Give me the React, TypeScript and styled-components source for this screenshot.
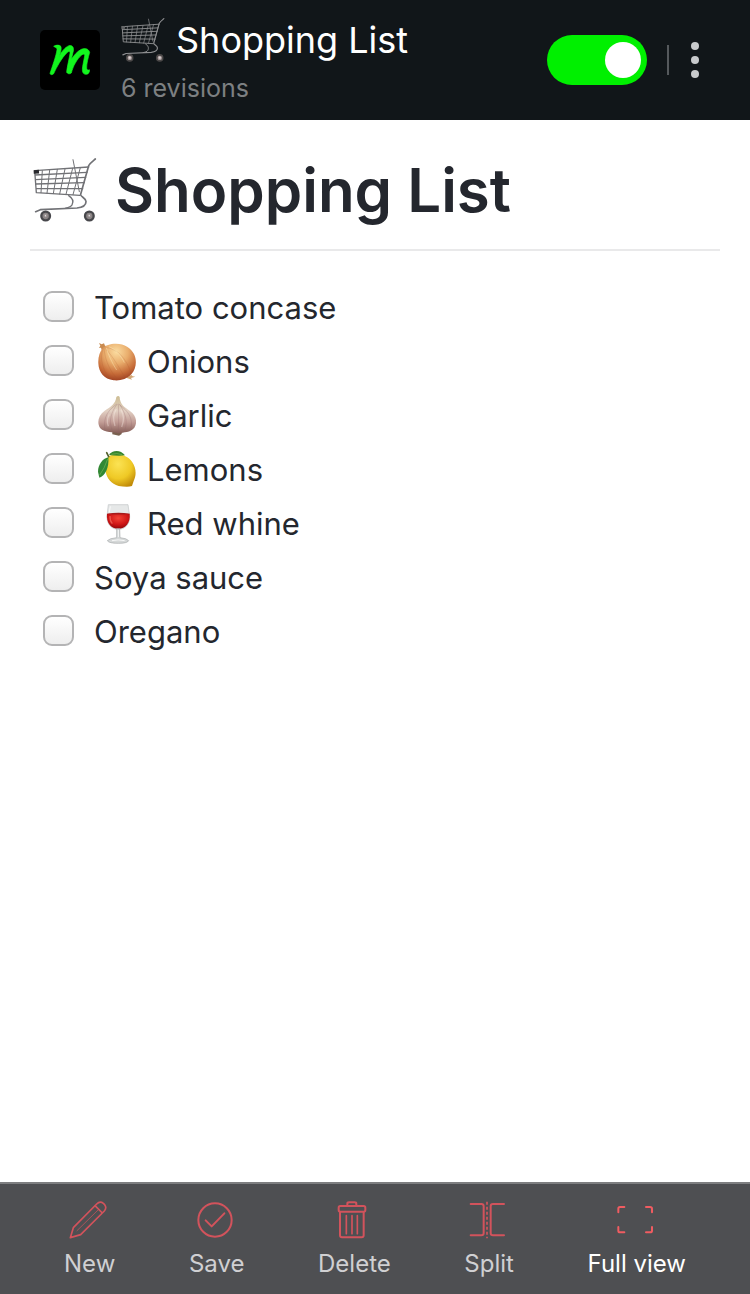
import React from "react";
import styled, { createGlobalStyle } from "styled-components";

const GlobalStyle = createGlobalStyle`
  * { box-sizing: border-box; }
  body {
    margin: 0;
    background: #ffffff;
    color: #24272e;
    font-family: Inter, "Liberation Sans", sans-serif;
  }
`;

const Page = styled.div`
  display: flex;
  flex-direction: column;
  min-height: 100vh;
`;

const Header = styled.header`
  display: flex;
  align-items: center;
  gap: 20px;
  height: 120px;
  padding: 0 40px;
  background: #111619;
`;

const Logo = styled.a`
  display: block;
  width: 60px;
  height: 60px;
  border-radius: 5px;
  background: #000000;
`;

const Heading = styled.div`
  flex: 1;
  min-width: 0;
  padding: 8px 0 0 1px;
`;

const DocumentName = styled.div`
  display: flex;
  align-items: center;
  gap: 11px;
  height: 48px;
  color: #ffffff;
  font-size: 36px;
  line-height: 48px;
  white-space: nowrap;
`;

const Revisions = styled.div`
  height: 48px;
  color: #7d8082;
  font-size: 25px;
  line-height: 48px;
`;

const Switch = styled.input`
  appearance: none;
  display: flex;
  align-items: center;
  justify-content: flex-start;
  width: 100px;
  height: 50px;
  margin: 0;
  padding: 0 6px;
  border-radius: 25px;
  background: #5a5d60;
  cursor: pointer;

  &::before {
    content: "";
    width: 36px;
    height: 36px;
    border-radius: 50%;
    background: #ffffff;
  }

  &:checked {
    justify-content: flex-end;
    background: #00f000;
  }
`;

const Divider = styled.span`
  width: 2px;
  height: 30px;
  background: #55595c;
`;

const MenuButton = styled.button`
  display: flex;
  flex-direction: column;
  align-items: center;
  justify-content: center;
  gap: 6px;
  width: 12px;
  height: 50px;
  margin-right: 9px;
  padding: 0;
  border: 0;
  background: none;
  cursor: pointer;
`;

const Dot = styled.span`
  width: 8px;
  height: 8px;
  border-radius: 50%;
  background: #c8cacc;
`;

const Main = styled.main`
  flex: 1;
  padding: 30px;
`;

const Title = styled.h1`
  display: flex;
  align-items: center;
  gap: 18px;
  margin: 0;
  padding: 0 3px 19px;
  border-bottom: 2px solid #e9e9ea;
  font-size: 60px;
  font-weight: 600;
  line-height: 80px;
`;

const List = styled.ul`
  margin: 30px 0 0;
  padding: 0 13px;
  list-style: none;
`;

const Item = styled.li`
  display: flex;
  align-items: center;
  gap: 20px;
  height: 54px;
`;

const Checkbox = styled.input`
  appearance: none;
  flex: none;
  width: 31px;
  height: 31px;
  margin: 0 0 3px;
  border: 2px solid #b4b4b5;
  border-radius: 9px;
  background: linear-gradient(#ffffff, #eeeeee);

  &:checked {
    background: #00f000;
  }
`;

const ItemLabel = styled.label`
  display: flex;
  align-items: center;
  font-size: 31px;
  line-height: 54px;
`;

const Toolbar = styled.nav`
  display: flex;
  justify-content: space-between;
  height: 112px;
  padding: 17px 64px 0;
  border-top: 2px solid #7d7e80;
  background: #4e4f52;
`;

const Tool = styled.button<{ $active?: boolean }>`
  display: flex;
  flex-direction: column;
  align-items: center;
  gap: 9px;
  padding: 0;
  border: 0;
  background: none;
  color: ${(p) => (p.$active ? "#ffffff" : "#d0d0d2")};
  font-family: inherit;
  font-size: 24px;
  line-height: 32px;
  cursor: pointer;
`;

const Icon = styled.svg`
  display: block;
  flex: none;
`;

const FoodIcon = styled(Icon)`
  margin: 0 11px 0 2px;
`;

const ToolIcon = styled(Icon)`
  margin-right: 4px;
`;

const Cart = ({ size, dark }: { size: number; dark?: boolean }) => {
  const wire = dark ? "#8e8f91" : "#717276";
  return (
    <Icon width={size} height={size} viewBox="40 54 192 192" fill="none" stroke={wire} strokeLinecap="round" strokeLinejoin="round" aria-hidden="true">
      <path strokeWidth="5" d="M227 57C220 63 213 67 207 77L183 163C181 170 200 174 199 185C199 198 188 202 172 204L62 209L48 215" />
      <path strokeWidth="4" d="M147 167C158 174 163 184 157 195C154 201 145 203 137 205" />
      <path strokeWidth="3" d="M160 59L179 155" />
      <path strokeWidth="4" d="M45 92L207 81M45 92L50 158L181 166M46 105L202 97M47 119L198 112M48 132L194 128M49 145L189 146" />
      <path strokeWidth="3" d="M68 92L64 158M90 90L82 160M113 88L101 161M136 87L120 162M159 85L139 163M182 83L160 164" />
      <path stroke={dark ? "#626365" : "#292a2e"} strokeWidth="11" strokeLinecap="butt" d="M42 96L58 95" />
      {[78, 209].map((x) => (
        <g key={x}>
          <circle cx={x} cy="228" r="13" strokeWidth="7" stroke={dark ? "#4b4848" : "#47474b"} fill={dark ? "#a99c9c" : "#8a8485"} />
          <circle cx={x} cy="227" r="4" strokeWidth="3" stroke={dark ? "#cfc4c4" : "#958b8c"} fill="#dddddd" />
        </g>
      ))}
    </Icon>
  );
};

const Onion = () => (
  <FoodIcon width="40" height="40" viewBox="198 186 120 120" aria-hidden="true">
    <defs>
      <radialGradient id="onion" cx=".48" cy=".22" r=".8">
        <stop offset="0" stopColor="#fbdca0" />
        <stop offset=".4" stopColor="#e9ad6c" />
        <stop offset=".75" stopColor="#c66b38" />
        <stop offset="1" stopColor="#9c3f20" />
      </radialGradient>
    </defs>
    <path fill="#c98b50" d="M207 189L215 193L222 190L225 197L234 199L224 212L215 211L213 203L207 204L211 197Z" />
    <path fill="#d2a573" d="M288 293L304 285L308 289L316 290L303 294L306 299Z" />
    <path fill="url(#onion)" d="M219 205C226 196 240 191 258 191C284 191 303 204 312 222C322 243 318 267 304 283C290 298 270 303 251 301C222 298 206 277 205 250C204 231 209 215 219 205Z" />
    <path fill="none" stroke="#a94f29" strokeOpacity=".28" strokeWidth="2" d="M220 205C207 235 218 275 244 299M222 204C224 235 238 275 265 299M223 203C241 219 264 255 284 292M223 202C258 204 288 231 303 280" />
    <path fill="none" stroke="#fff0bd" strokeOpacity=".4" strokeWidth="3" d="M229 203C234 222 246 249 260 270M237 200C256 207 273 227 283 248" />
  </FoodIcon>
);

const Garlic = () => (
  <FoodIcon width="40" height="40" viewBox="198 33 120 120" aria-hidden="true">
    <defs>
      <linearGradient id="garlic" x1="0" y1="0" x2="0" y2="1">
        <stop offset="0" stopColor="#cdbd93" />
        <stop offset=".4" stopColor="#e2d0c3" />
        <stop offset=".7" stopColor="#c29d96" />
        <stop offset="1" stopColor="#845c56" />
      </linearGradient>
    </defs>
    <path fill="#79604f" d="M247 133L276 132L275 147L267 152L247 148Z" />
    <path fill="url(#garlic)" d="M259 36Q265 30 269 36C270 57 282 66 300 78C319 91 323 113 313 128C302 143 280 141 266 145C252 140 223 144 211 130C200 115 204 91 224 77C242 66 257 56 259 36Z" />
    <path fill="none" stroke="#8f626b" strokeOpacity=".4" strokeWidth="2" d="M260 57C238 74 218 92 225 136M262 57C244 79 235 109 247 138M265 56C266 84 267 112 264 143M268 57C285 82 295 108 284 138M269 60C294 78 311 100 302 133" />
    <path fill="none" stroke="#fff4ed" strokeOpacity=".35" strokeWidth="4" d="M259 72C250 86 249 105 255 123M273 74C282 90 282 109 275 126M238 88Q228 106 235 124" />
  </FoodIcon>
);

const Lemon = () => (
  <FoodIcon width="40" height="40" viewBox="198 195 120 120" aria-hidden="true">
    <defs>
      <radialGradient id="lemon" cx=".42" cy=".3" r=".75">
        <stop offset="0" stopColor="#fbe354" />
        <stop offset=".6" stopColor="#efc925" />
        <stop offset="1" stopColor="#c18b08" />
      </radialGradient>
    </defs>
    <path fill="url(#lemon)" d="M238 213C260 202 292 210 306 230C320 250 319 272 311 288L306 303C296 307 280 305 266 303C244 296 230 281 227 259C225 240 227 222 238 213Z" />
    <path fill="#37852d" d="M237 210C246 195 271 192 285 211C270 213 253 212 237 210Z" />
    <path fill="#328834" d="M235 217C217 221 204 240 204 260L208 278C225 274 238 248 235 217Z" />
    <path fill="none" stroke="#75b557" strokeWidth="2" d="M233 222Q224 250 209 270M244 208Q261 203 276 209" />
    <path fill="none" stroke="#53602c" strokeWidth="5" strokeLinecap="round" d="M230 203L236 215" />
  </FoodIcon>
);

const Wine = () => (
  <FoodIcon width="40" height="40" viewBox="198 357 120 120" aria-hidden="true">
    <defs>
      <radialGradient id="wine" cx=".5" cy=".3" r=".65">
        <stop offset="0" stopColor="#f24335" />
        <stop offset=".65" stopColor="#cf1616" />
        <stop offset="1" stopColor="#9c0a0c" />
      </radialGradient>
    </defs>
    <path fill="#e6e8e8" stroke="#bfc4c5" strokeWidth="2" d="M235 359H294L299 393C300 418 285 433 265 433C244 433 230 417 231 393Z" />
    <path fill="url(#wine)" d="M231 386H299C302 414 286 431 265 431C243 431 228 414 231 386Z" />
    <path fill="#a51b1b" d="M231 386Q265 381 299 386Q265 391 231 386Z" />
    <path fill="#d5d8d8" stroke="#a7abac" strokeWidth="2" d="M260 431H269L270 458Q291 460 296 467Q292 475 265 475Q237 475 232 467Q238 460 260 458Z" />
    <path fill="none" stroke="#ffffff" strokeOpacity=".8" strokeWidth="3" d="M241 364L238 382M265 435V456M246 467Q264 462 284 467" />
    <path fill="none" stroke="#ff8d7c" strokeOpacity=".5" strokeWidth="4" d="M240 393Q239 407 247 416" />
  </FoodIcon>
);

const LogoMark = () => (
  <Icon width="60" height="60" viewBox="120 90 180 180" fill="#12f51e" stroke="#12f51e" strokeWidth="2" strokeLinejoin="round" aria-hidden="true">
    <path d="M161 139C168 134 180 134 183 140C185 148 181 160 177 170C184 155 196 141 207 137C218 135 222 143 220 153L214 178C222 166 232 154 244 148C256 143 266 147 269 157C265 171 259 194 260 205C261 211 265 211 268 209C270 215 266 223 258 223C247 223 246 212 248 199L254 168C255 161 250 161 244 166C231 177 219 199 214 219C210 223 203 222 200 217C201 201 208 176 210 160C211 152 206 153 200 159C185 174 170 201 161 221C157 225 151 225 150 220C156 202 169 166 171 149C172 143 166 143 161 139Z" />
  </Icon>
);

const toolIcon = (viewBox: string, children: React.ReactNode) => (
  <ToolIcon width="38" height="38" viewBox={viewBox} fill="none" stroke="#d2535c" strokeWidth="6" strokeLinecap="round" strokeLinejoin="round" aria-hidden="true">
    {children}
  </ToolIcon>
);

const tools = [
  {
    name: "New",
    icon: toolIcon("209 92 114 114", <><path strokeWidth="5" d="M213 202L222 172L292 101Q302 91 312 99L316 103Q323 112 315 122L244 193ZM287 106L309 128" /><path strokeWidth="3" strokeOpacity=".7" d="M233 181L297 118" /></>),
  },
  {
    name: "Save",
    icon: toolIcon("584 95 114 114", <><circle cx="641" cy="152" r="50" /><path d="M613 153L631 171L669 132" /></>),
  },
  {
    name: "Delete",
    icon: toolIcon("246 92 114 114", <><path d="M289 106V100Q289 96 294 96H311Q316 96 316 100V106" /><rect x="263" y="107" width="80" height="17" rx="5" /><path d="M267 125V195Q267 201 273 201H332Q338 201 338 195V125" /><path strokeWidth="5" d="M286 136V190M303 136V190M319 136V190" /></>),
  },
  {
    name: "Split",
    icon: toolIcon("658 92 114 114", <><path d="M666 101H698Q705 101 705 108V189Q705 195 698 195H666M766 101H733Q726 101 726 108V189Q726 195 733 195H766" /><path strokeWidth="5" strokeLinecap="butt" strokeDasharray="9 6" d="M715 94V204" /></>),
  },
  {
    name: "Full view",
    icon: toolIcon("314 95 114 114", <path stroke="#f05c61" d="M321 129V118Q321 113 326 113H339M404 113H416Q422 113 422 118V129M321 173V184Q321 189 326 189H339M404 189H416Q422 189 422 184V173" />),
  },
];

const items = [
  { name: "Tomato concase" },
  { name: "Onions", icon: <Onion /> },
  { name: "Garlic", icon: <Garlic /> },
  { name: "Lemons", icon: <Lemon /> },
  { name: "Red whine", icon: <Wine /> },
  { name: "Soya sauce" },
  { name: "Oregano" },
];

export default function App() {
  return (
    <Page>
      <GlobalStyle />
      <Header>
        <Logo href="#" aria-label="Home"><LogoMark /></Logo>
        <Heading>
          <DocumentName><Cart size={44} dark />Shopping List</DocumentName>
          <Revisions>6 revisions</Revisions>
        </Heading>
        <Switch type="checkbox" role="switch" defaultChecked aria-label="Preview" />
        <Divider />
        <MenuButton type="button" aria-label="Menu"><Dot /><Dot /><Dot /></MenuButton>
      </Header>
      <Main>
        <Title><Cart size={64} />Shopping List</Title>
        <List>
          {items.map(({ name, icon }, i) => (
            <Item key={name}>
              <Checkbox type="checkbox" id={`item-${i}`} />
              <ItemLabel htmlFor={`item-${i}`}>{icon}{name}</ItemLabel>
            </Item>
          ))}
        </List>
      </Main>
      <Toolbar>
        {tools.map(({ name, icon }) => (
          <Tool key={name} type="button" $active={name === "Full view"}>{icon}{name}</Tool>
        ))}
      </Toolbar>
    </Page>
  );
}
